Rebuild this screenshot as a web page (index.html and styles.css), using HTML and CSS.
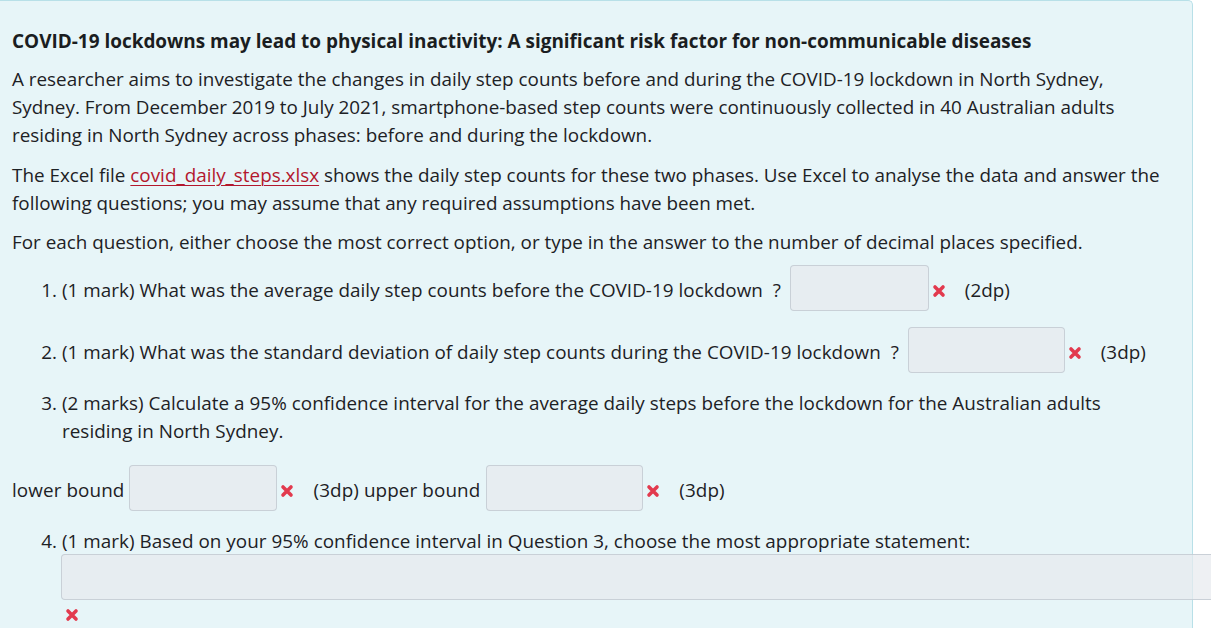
FILE: index.html
```html
<!DOCTYPE html>
<html lang="en">
<head>
<meta charset="utf-8">
<title>COVID-19 lockdowns question</title>
<link rel="stylesheet" href="styles.css">
</head>
<body>
<div class="card">
  <h3 class="title">COVID-19 lockdowns may lead to physical inactivity: A significant risk factor for non-communicable diseases</h3>
  <p class="p1">A researcher aims to investigate the changes in daily step counts before and during the COVID-19 lockdown in North Sydney, Sydney. From December 2019 to July 2021, smartphone-based step counts were continuously collected in 40 Australian adults residing in North Sydney across phases: before and during the lockdown.</p>
  <p class="p2">The Excel file <a class="link" href="#">covid_daily_steps.xlsx</a> shows the daily step counts for these two phases. Use Excel to analyse the data and answer the following questions; you may assume that any required assumptions have been met.</p>
  <p class="p3">For each question, either choose the most correct option, or type in the answer to the number of decimal places specified.</p>
  <ol class="qlist">
    <li class="q">(1 mark) What was the average daily step counts before the COVID-19 lockdown&nbsp; ? <span class="box qbox w139"></span><span class="wrong"><svg viewBox="0 0 14 14" width="14" height="14"><path d="M3 3L11 11M11 3L3 11" /></svg></span> (2dp)</li>
    <li class="q">(1 mark) What was the standard deviation of daily step counts during the COVID-19 lockdown&nbsp; ? <span class="box qbox w157"></span><span class="wrong"><svg viewBox="0 0 14 14" width="14" height="14"><path d="M3 3L11 11M11 3L3 11" /></svg></span> (3dp)</li>
    <li class="q last">(2 marks) Calculate a 95% confidence interval for the average daily steps before the lockdown for the Australian adults residing in North Sydney.</li>
  </ol>
  <div class="bounds">lower bound <span class="box w148"></span><span class="wrong"><svg viewBox="0 0 14 14" width="14" height="14"><path d="M3 3L11 11M11 3L3 11" /></svg></span> (3dp) upper bound <span class="box upper w157"></span><span class="wrong"><svg viewBox="0 0 14 14" width="14" height="14"><path d="M3 3L11 11M11 3L3 11" /></svg></span> (3dp)</div>
  <ol class="qlist q4list" start="4">
    <li class="q">(1 mark) Based on your 95% confidence interval in Question 3, choose the most appropriate statement:
      <div class="widebox"></div>
      <div class="wrong-row"><span class="wrong solo"><svg viewBox="0 0 14 14" width="14" height="14"><path d="M3 3L11 11M11 3L3 11" /></svg></span></div>
    </li>
  </ol>
</div>
</body>
</html>
```
FILE: styles.css
```css
html, body {
  margin: 0;
  padding: 0;
  overflow: hidden;
  background: #ffffff;
}
body {
  font-family: "Open Sans", "Noto Sans", sans-serif;
  font-size: 18.85px;
  line-height: 28px;
  color: #1d2125;
}
.card {
  box-sizing: border-box;
  margin-left: -20px;
  width: 1213px;
  height: 628px;
  overflow: visible;
  background: #e7f5f8;
  border: 1px solid #b8e0e8;
  border-bottom: none;
  border-radius: 5px 5px 0 0;
  padding: 26px 27px 0 31px;
}
.title {
  margin: 0 0 10px;
  font-size: 18.95px;
  line-height: 28px;
  font-weight: 700;
  color: #1a1d21;
}
.p1 { margin: 0 0 12px; }
.p2 { margin: 0 0 11px; }
.p3 { margin: 0; }
.link {
  color: #b3172d;
  text-decoration: underline;
  text-underline-offset: 3px;
  text-decoration-thickness: 1px;
}
.qlist {
  margin: 9px 0 0;
  padding: 0 0 0 50px;
}
.q {
  margin: 0 0 16px;
  line-height: 28px;
  letter-spacing: 0.04px;
}
.q.last { margin-bottom: 0; }
.box {
  display: inline-block;
  box-sizing: border-box;
  height: 46px;
  vertical-align: -14px;
  background: rgba(232, 234, 238, 0.72);
  border: 1px solid rgba(190, 198, 206, 0.75);
  border-radius: 4px;
}
.qbox { margin-left: 4px; }
.upper { margin-left: 1px; }
.w139 { width: 139px; }
.w148 { width: 148px; }
.w157 { width: 157px; }
.wrong {
  display: inline-block;
  width: 14px;
  height: 14px;
  margin: 0 14px 0 3px;
  vertical-align: -1px;
}
.wrong svg {
  display: block;
}
.wrong path {
  stroke: #e23a4e;
  stroke-width: 3.6;
  stroke-linecap: round;
  fill: none;
}
.bounds {
  margin-top: 20px;
  line-height: 28px;
  letter-spacing: 0.1px;
}
.q4list {
  margin-top: 16px;
}
.widebox {
  box-sizing: border-box;
  margin: -1px 0 0 -1px;
  width: 1200px;
  height: 46px;
  background: rgba(232, 234, 238, 0.72);
  border: 1px solid rgba(190, 198, 206, 0.75);
  border-radius: 4px;
}
.wrong-row {
  padding: 8px 0 0 3px;
  line-height: 14px;
}
.wrong.solo { margin: 0; vertical-align: top; }
```
